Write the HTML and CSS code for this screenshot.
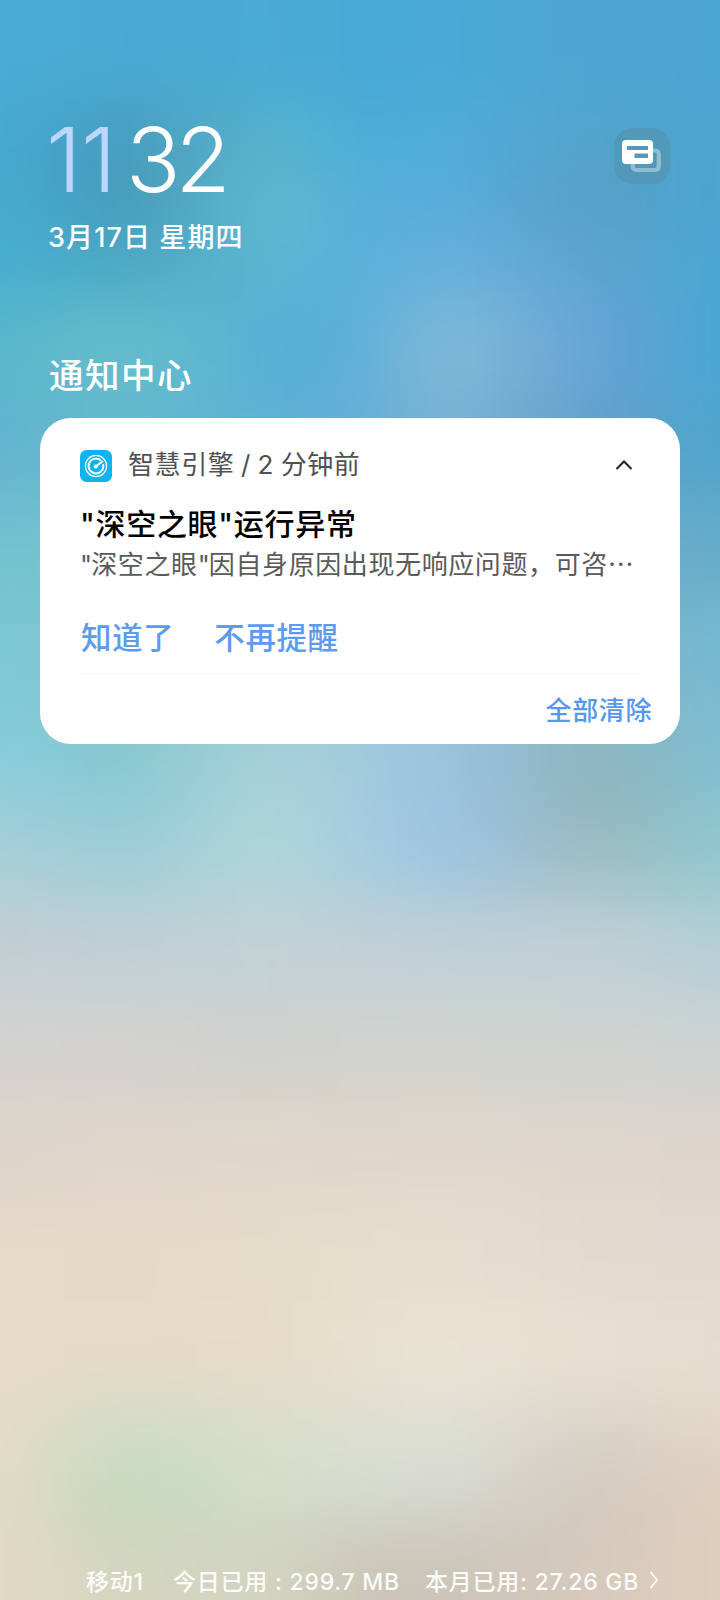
FILE: index.html
```html
<!DOCTYPE html>
<html lang="zh-CN">
<head>
<meta charset="utf-8">
<title>通知中心</title>
<link rel="stylesheet" href="styles.css">
</head>
<body>
<main class="shade">
  <div class="wallpaper" aria-hidden="true">
    <i class="w1"></i><i class="w2"></i><i class="w3"></i><i class="w4"></i><i class="w5"></i><i class="w6"></i><i class="w7"></i><i class="w8"></i><i class="w9"></i><i class="w10"></i><i class="w11"></i><i class="w12"></i><i class="w13"></i><i class="w14"></i><i class="w15"></i><i class="w16"></i><i class="w17"></i><i class="w18"></i><i class="w19"></i>
  </div>
  <header class="top">
    <div class="clock">
      <div class="time"><span class="hour">11</span><span class="minute">32</span></div>
      <div class="date">3月17日 星期四</div>
    </div>
    <button class="switch" aria-label="切换">
      <svg width="56" height="56" viewBox="0 0 56 56">
        <rect x="18.800" y="22.500" width="26" height="19.500" rx="3.500" fill="none" stroke="#fff" stroke-opacity=".36" stroke-width="4.200"/>
        <rect x="8" y="12" width="31" height="24" rx="4" fill="#fff"/>
        <path d="M13 18h21v4H13zM20.500 25.500h13.500v4.500H20.500z" fill="#5699b8"/>
      </svg>
    </button>
  </header>
  <h1 class="heading">通知中心</h1>
  <section class="card">
    <div class="source">
      <svg class="app" width="32" height="32" viewBox="0 0 32 32">
        <rect width="32" height="32" rx="6.500" fill="#10b2ef"/>
        <g fill="none" stroke="#fff" stroke-linecap="round">
          <circle cx="16" cy="16" r="10.600" stroke-width="1.200"/>
          <path d="M20.500 10.200A7.400 7.400 0 1 0 23.300 15" stroke-width="2"/>
          <path d="M16 16.300L22.500 11.500" stroke-width="2"/>
        </g>
        <circle cx="15.800" cy="16.500" r="2" fill="#fff"/>
      </svg>
      <span class="name">智慧引擎 / 2 分钟前</span>
      <svg class="chev" width="18" height="12" viewBox="0 0 18 12"><path d="M1.500 10L9 2.500L16.500 10" fill="none" stroke="#222" stroke-width="2"/></svg>
    </div>
    <h2 class="title">"深空之眼"运行异常</h2>
    <p class="body"><span class="q">"</span>深空之眼<span class="q">"</span>因自身原因出现无响应问题，可咨⋯</p>
    <div class="actions"><span>知道了</span><span>不再提醒</span></div>
    <div class="clear">全部清除</div>
  </section>
  <footer class="usage">
    <span class="sim">移动1</span><span class="today">今日已用 : 299.7 MB</span><span class="month">本月已用: 27.26 GB</span>
    <svg width="10" height="18" viewBox="0 0 10 18"><path d="M1.500 1L8 9L1.500 17" fill="none" stroke="#fff" stroke-width="1.800"/></svg>
  </footer>
</main>
</body>
</html>
```
FILE: styles.css
```css
* { box-sizing: border-box; }
body { margin: 0; font-family: Inter, "Noto Sans CJK SC", sans-serif; }
.shade {
  position: relative; isolation: isolate;
  width: 720px; height: 1600px; overflow: hidden;
  display: flex; flex-direction: column;
}

/* Blurred wallpaper: stacked colour bands, extended past the edges so the blur stays opaque */
.wallpaper {
  position: absolute; z-index: -1; inset: -120px;
  display: flex; flex-direction: column; filter: blur(32px);
}
.wallpaper i {
  flex: none; height: 100px;
  background: linear-gradient(to right, var(--a) 120px, var(--b) 245px, var(--c) 390px, var(--d) 475px, var(--e) 568px, var(--f) 715px, var(--g) 840px);
}
.wallpaper .w1 { height: 220px; --a:#4aadd6; --b:#4aa9d2; --c:#4aabd5; --d:#48a9d7; --e:#4aa9d6; --f:#4ea5d1; --g:#4ba5d3; }
.wallpaper .w2 { height: 75px; --a:#45a9d0; --b:#489cbe; --c:#58b3cc; --d:#4caed6; --e:#52addb; --f:#53a4cb; --g:#4ca4cf; }
.wallpaper .w3 { height: 50px; --a:#45abcd; --b:#4597b7; --c:#64bccd; --d:#58afda; --e:#58acdb; --f:#559cc2; --g:#4aa5cf; }
.wallpaper .w4 { height: 75px; --a:#48b0d0; --b:#4ba7c4; --c:#5bb7d2; --d:#59b0d9; --e:#66b1de; --f:#5ca5cf; --g:#4aa6d2; }
.wallpaper .w5 { --a:#59b6cc; --b:#66bfcc; --c:#57b0d4; --d:#5cafd9; --e:#84bbd8; --f:#67a3d5; --g:#48a6d3; }
.wallpaper .w6 { --a:#62b5cf; --b:#64b8ce; --c:#60b2d4; --d:#65aed6; --e:#7ab1d2; --f:#629fc8; --g:#4fa6cd; }
.wallpaper .w7 { --a:#71c3cf; --b:#76c2ce; --c:#7ebed2; --d:#80bbd3; --e:#84b9d6; --f:#70aac8; --g:#65adca; }
.wallpaper .w8 { --a:#7cc8d2; --b:#80c5ce; --c:#92c8d2; --d:#93c4d6; --e:#90bfda; --f:#80b2c3; --g:#76bad2; }
.wallpaper .w9 { height: 75px; --a:#84cdd9; --b:#88c6ce; --c:#a5d0d7; --d:#a2cbdb; --e:#98c4de; --f:#8db4bf; --g:#7fbdd1; }
.wallpaper .w10 { height: 50px; --a:#94cedb; --b:#8acad6; --c:#add5da; --d:#a3cbde; --e:#9ac3e1; --f:#91b2b8; --g:#86c4d0; }
.wallpaper .w11 { height: 75px; --a:#a9cfd8; --b:#a0cdd7; --c:#b1d6db; --d:#a7cddf; --e:#9fc5e1; --f:#9fbdc5; --g:#92c8cf; }
.wallpaper .w12 { --a:#c4ced3; --b:#c0d0d5; --c:#c2d2d5; --d:#c2d0d5; --e:#bfd0d7; --f:#c1d0d6; --g:#b5cfd6; }
.wallpaper .w13 { --a:#d4d3d0; --b:#d4d2cf; --c:#d0d1cd; --d:#d2d3cf; --e:#d2d3ce; --f:#d0d3d0; --g:#cfd3d2; }
.wallpaper .w14 { --a:#ddd4ca; --b:#dfd6cb; --c:#e0d7cb; --d:#dfd6ca; --e:#e0d7cc; --f:#ded6ce; --g:#ddd4cd; }
.wallpaper .w15 { --a:#e6dac8; --b:#e7d9c8; --c:#e5dbc9; --d:#e6decc; --e:#e5decf; --f:#e3dace; --g:#e2d9cf; }
.wallpaper .w16 { --a:#e7dbc7; --b:#e6dac8; --c:#e7dbc9; --d:#e8e0ce; --e:#e9e3d3; --f:#e8e0d2; --g:#e6ddd1; }
.wallpaper .w17 { height: 75px; --a:#e4dbc6; --b:#cddcc4; --c:#d8deca; --d:#dbded0; --e:#dddfd6; --f:#d8d1c6; --g:#e2d5c5; }
.wallpaper .w18 { height: 50px; --a:#e2dac6; --b:#c2d9ba; --c:#d2ddc8; --d:#d5dcd0; --e:#d5d8d4; --f:#d0c7bb; --g:#e0cfbf; }
.wallpaper .w19 { height: 195px; --a:#e1d9c5; --b:#d4d6c0; --c:#d3d4c1; --d:#cbc7b8; --e:#cbc5b8; --f:#d6cabc; --g:#e0cebd; }

.top { display: flex; justify-content: space-between; padding: 114px 50px 0 48px; color: #fff; }
.time { display: flex; height: 91px; line-height: 91px; font-size: 90px; font-weight: 300; }
.hour { color: #bcd6ff; letter-spacing: -.5px; margin-left: -2px; width: 80px; }
.minute { letter-spacing: -5px; }
.date { height: 40px; line-height: 40px; margin-top: 13px; font-size: 27px; font-weight: 500; letter-spacing: 1.1px; white-space: nowrap; }
.switch { width: 56px; height: 56px; margin-top: 14px; padding: 0; border: 0; border-radius: 18px; background: rgba(82,150,180,.8); }
.heading { margin: 92px 0 0 49px; height: 52px; line-height: 52px; font-size: 34.500px; font-weight: 500; letter-spacing: 1.5px; color: #fff; }
.card { width: 640px; height: 326px; margin: 16px 40px 0; border-radius: 31px; background: #fff; padding: 31px 40px 0; white-space: nowrap; }
.source { display: flex; align-items: center; height: 34px; font-size: 26px; color: #505050; letter-spacing: .6px; }
.name { margin-left: 16px; line-height: 34px; height: 36px; word-spacing: -1.300px; }
.chev { margin-left: auto; margin-right: 7px; margin-top: -2px; }
.title { margin: 19px 0 0; height: 46px; line-height: 45px; font-size: 30px; font-weight: 500; letter-spacing: .7px; color: #000; }
.body { margin: 0; height: 34px; line-height: 34px; font-size: 26px; letter-spacing: .6px; color: #5a5a5a; }
.q { letter-spacing: -.9px; }
.actions { display: flex; gap: 40px; height: 74px; margin-top: 18px; padding-left: 1px; line-height: 75px; font-size: 30.500px; font-weight: 500; letter-spacing: .6px; color: #5b9bf0; border-bottom: 1px solid #f5f5f5; }
.clear { height: 70px; line-height: 73px; margin-right: -12px; text-align: right; font-size: 26px; font-weight: 500; letter-spacing: .6px; color: #5796ec; }
.usage { display: flex; align-items: center; height: 40px; margin-top: auto; padding-left: 86px; font-size: 23px; font-weight: 500; letter-spacing: .75px; color: rgba(255,255,255,.95); white-space: nowrap; }
.sim { width: 87px; }
.today { width: 252px; }
.month { width: 224px; }
```
